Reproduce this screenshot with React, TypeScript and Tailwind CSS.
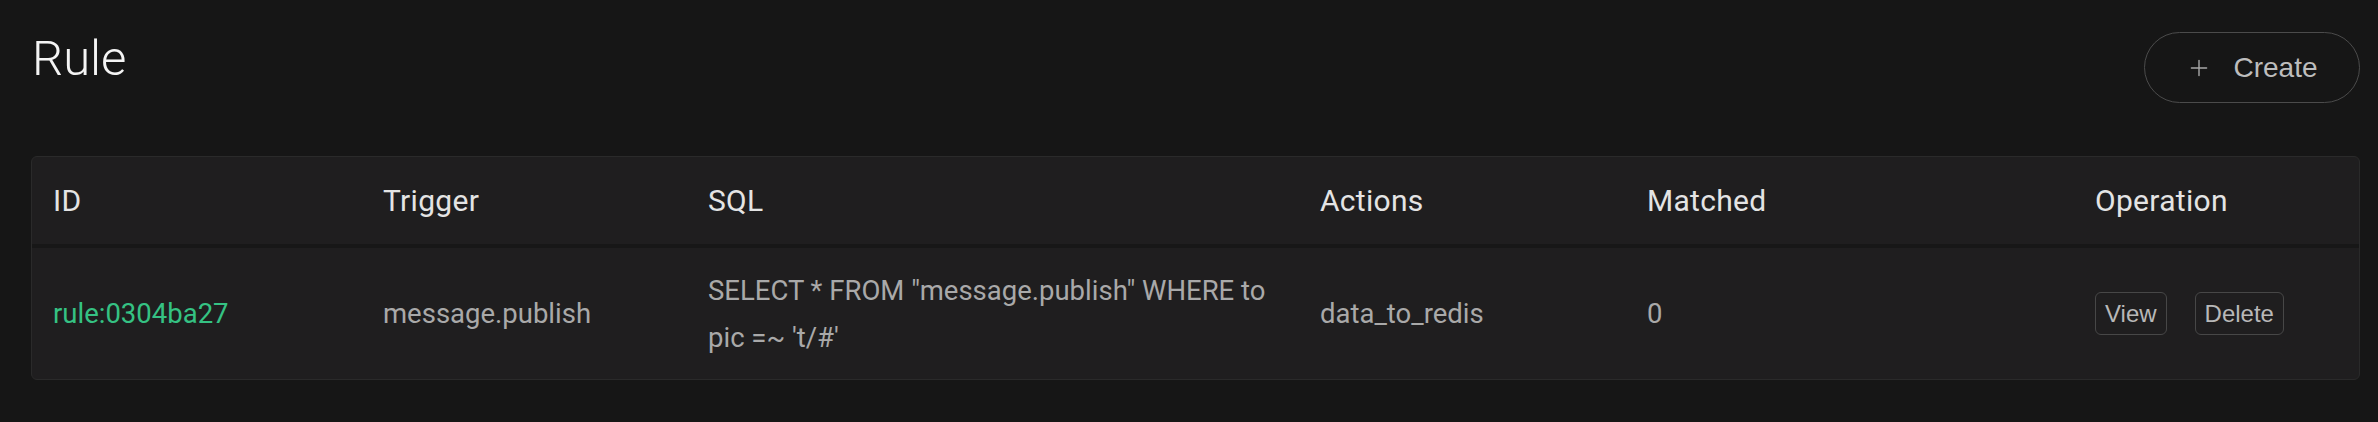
import { Plus } from "lucide-react";

type Rule = {
  id: string;
  trigger: string;
  sql: string;
  actions: string;
  matched: number;
};

const rules: Rule[] = [
  {
    id: "rule:0304ba27",
    trigger: "message.publish",
    sql: `SELECT * FROM "message.publish" WHERE topic =~ 't/#'`,
    actions: "data_to_redis",
    matched: 0,
  },
];

const columns = ["ID", "Trigger", "SQL", "Actions", "Matched", "Operation"];

/** Shared column track so header and body rows line up. */
const grid =
  "grid grid-cols-[330px_325px_612px_327px_448px_1fr]";

function SmallButton({ label }: { label: string }) {
  return (
    <button className="h-[43px] rounded-[6px] border border-[#474747] px-[9px] font-['Liberation_Sans',Arial,sans-serif] text-[24px] leading-none text-[#b8b8b8]">
      {label}
    </button>
  );
}

export default function App() {
  return (
    <div className="min-h-screen w-full bg-[#161616] pl-[31px] pr-[18px] font-['Roboto',sans-serif]">
      <div className="flex items-start justify-between pt-[32px]">
        <h1 className="mt-[2px] pl-px text-[49px] font-light leading-[50px] text-[#f4f4f4]">
          Rule
        </h1>
        <button className="flex h-[71px] w-[216px] items-center justify-center gap-[21px] rounded-full border-[1.5px] border-[#4b4b4b] font-['Liberation_Sans',Arial,sans-serif] text-[28px] text-[#bdbdbd]">
          <Plus className="h-[26px] w-[26px] text-[#a8a8a8]" strokeWidth={1.3} />
          <span>Create</span>
        </button>
      </div>

      <div className="mt-[53px] overflow-hidden rounded-[6px] border border-[#2a2a2a] bg-[#1f1e1f]">
        <div className={`${grid} h-[87px] items-center`}>
          {columns.map((c) => (
            <div
              key={c}
              className="px-[21px] text-[30px] leading-none tracking-[0.3px] text-[#e4e4e4]"
            >
              {c}
            </div>
          ))}
        </div>
        <div className="h-[4px] bg-[#171717]" />
        {rules.map((r) => (
          <div
            key={r.id}
            className={`${grid} h-[131px] items-center text-[27.5px] leading-[47px] text-[#a9a9a9]`}
          >
            <div className="px-[21px] text-[#35c283]">{r.id}</div>
            <div className="px-[21px]">{r.trigger}</div>
            <div className="px-[21px] break-all">{r.sql}</div>
            <div className="px-[21px]">{r.actions}</div>
            <div className="px-[21px]">{r.matched}</div>
            <div className="flex items-center gap-[28px] px-[21px]">
              <SmallButton label="View" />
              <SmallButton label="Delete" />
            </div>
          </div>
        ))}
      </div>
    </div>
  );
}
